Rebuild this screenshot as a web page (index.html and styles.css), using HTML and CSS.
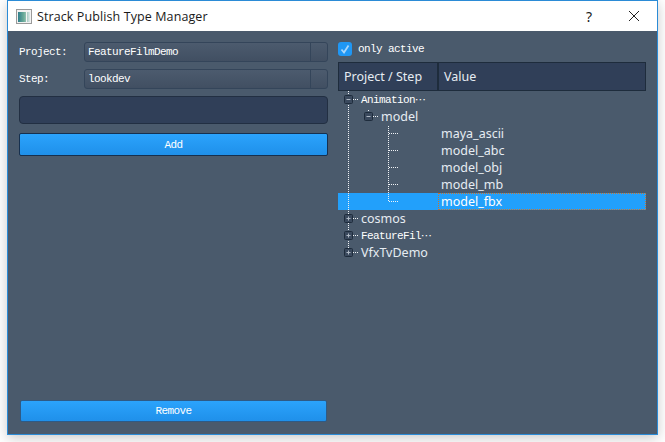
FILE: index.html
```html
<!DOCTYPE html>
<html lang="en">
<head>
<meta charset="utf-8">
<title>Strack Publish Type Manager</title>
<link rel="stylesheet" href="styles.css">
</head>
<body>
<div class="window">
  <header class="titlebar">
    <svg class="app-icon" width="16" height="15" viewBox="0 0 16 15">
      <defs>
        <linearGradient id="screen" x1="0" y1="0" x2="1" y2="0">
          <stop offset="0" stop-color="#2f7f8c"/>
          <stop offset="0.5" stop-color="#6fae9a"/>
          <stop offset="1" stop-color="#dfe8ea"/>
        </linearGradient>
      </defs>
      <rect x="0.5" y="0.5" width="15" height="14" fill="#f2f2f2" stroke="#9a9a9a"/>
      <rect x="2" y="3" width="12" height="10" fill="url(#screen)"/>
      <rect x="10" y="3" width="1" height="10" fill="#f4f4f4"/>
    </svg>
    <span class="title">Strack Publish Type Manager</span>
    <span class="help">?</span>
    <svg class="close" width="12" height="12" viewBox="0 0 12 12"><path d="M1 1 11 11M11 1 1 11" stroke="#222" stroke-width="1" fill="none"/></svg>
  </header>
  <main class="content">
    <section class="left">
      <div class="field">
        <label class="mono">Project:</label>
        <div class="combo"><span class="mono">FeatureFilmDemo</span><i class="combo-arrow"></i></div>
      </div>
      <div class="field">
        <label class="mono">Step:</label>
        <div class="combo"><span class="mono">lookdev</span><i class="combo-arrow"></i></div>
      </div>
      <div class="text-input"></div>
      <button class="btn btn-add mono">Add</button>
      <button class="btn btn-remove mono">Remove</button>
    </section>
    <section class="right">
      <div class="check-row">
        <span class="checkbox"><svg width="14" height="14" viewBox="0 0 14 14"><path d="M3.5 7.5 6 10.5 10.5 3.5" stroke="#a9d6fb" stroke-width="1.8" fill="none"/></svg></span>
        <span class="mono">only active</span>
      </div>
      <div class="tree">
        <div class="tree-head">
          <div class="head-cell head-first">Project / Step</div>
          <div class="head-cell">Value</div>
        </div>
        <div class="tree-body">
          <div class="row lvl0 mono">Animation<span class="dots">⋯</span></div>
          <div class="row lvl1">model</div>
          <div class="row"><span class="value">maya_ascii</span></div>
          <div class="row"><span class="value">model_abc</span></div>
          <div class="row"><span class="value">model_obj</span></div>
          <div class="row"><span class="value">model_mb</span></div>
          <div class="row selected"><span class="value">model_fbx</span></div>
          <div class="row lvl0">cosmos</div>
          <div class="row lvl0 mono">FeatureFil<span class="dots">⋯</span></div>
          <div class="row lvl0">VfxTvDemo</div>
          <svg class="branches" width="70" height="170" viewBox="0 0 70 170">
            <g class="dotted">
              <path d="M10.5 0V160"/>
              <path d="M15 8.5H21M35 25.5H41M15 127.5H21M15 144.5H21M15 161.5H21"/>
              <path d="M30.5 19V22"/>
              <path d="M50.5 35V110"/>
              <path d="M51 42.5H60M51 59.5H60M51 76.5H60M51 93.5H60M51 110.5H60"/>
            </g>
            <g class="expander">
              <rect x="6.5" y="4.5" width="8" height="8" rx="1"/>
              <path d="M8.5 8.5H12.5"/>
              <rect x="26.5" y="21.5" width="8" height="8" rx="1"/>
              <path d="M28.5 25.5H32.5"/>
              <rect x="6.5" y="123.5" width="8" height="8" rx="1"/>
              <path d="M8.5 127.5H12.5M10.5 125.5V129.5"/>
              <rect x="6.5" y="140.5" width="8" height="8" rx="1"/>
              <path d="M8.5 144.5H12.5M10.5 142.5V146.5"/>
              <rect x="6.5" y="157.5" width="8" height="8" rx="1"/>
              <path d="M8.5 161.5H12.5M10.5 159.5V163.5"/>
            </g>
          </svg>
        </div>
      </div>
    </section>
  </main>
</div>
</body>
</html>
```

FILE: styles.css
```css
* { box-sizing: border-box; }

html, body { height: 100%; }

body {
  margin: 0;
  background: #fff;
  overflow: hidden;
  font-family: "Noto Sans", "Open Sans", sans-serif;
  color: #e6ecf2;
}

.window {
  width: 651px;
  height: 435px;
  margin-left: 7px;
  display: flex;
  flex-direction: column;
  border: 1px solid #2b8bd6;
  box-shadow: 0 3px 12px rgba(0, 0, 0, 0.22);
}

.titlebar {
  height: 30px;
  flex: none;
  background: #fff;
  display: flex;
  align-items: center;
  padding-left: 8px;
  color: #1a1a1a;
}

.app-icon { flex: none; }

.title {
  margin-left: 5px;
  font-family: "Open Sans", sans-serif;
  font-size: 12.5px;
  letter-spacing: 0.1px;
  flex: 1;
}

.help {
  font-size: 14px;
  width: 12px;
  margin-right: 30px;
}

.close { margin-right: 17px; flex: none; }

.content {
  flex: 1;
  background: #4a5a6c;
  display: flex;
  gap: 10px;
  padding: 11px 11px 12px;
  min-height: 0;
}

.mono {
  font-family: "Liberation Mono", monospace;
  font-size: 11px;
  letter-spacing: -0.6px;
  color: #fff;
}

.left {
  width: 309px;
  flex: none;
  display: flex;
  flex-direction: column;
}

.field {
  display: flex;
  align-items: center;
  height: 20px;
  margin-bottom: 7px;
}

.field label { width: 65px; flex: none; }

.combo {
  flex: 1;
  height: 20px;
  border: 1px solid #34455a;
  border-radius: 3px;
  background: linear-gradient(#4c5b6e, #414f62);
  display: flex;
  align-items: center;
  justify-content: space-between;
  padding-left: 3px;
}

.combo-arrow {
  width: 17px;
  height: 18px;
  border-left: 1px solid #34455a;
}

.text-input {
  height: 28px;
  background: #303f58;
  border: 1px solid #222f42;
  border-radius: 4px;
}

.btn {
  display: block;
  padding: 0;
  background: linear-gradient(#2ba3fc, #1f90ea);
  border-radius: 2px;
  text-align: center;
}

.btn-add {
  height: 23px;
  margin-top: 9px;
  border: 1px solid #16304f;
}

.btn-remove {
  height: 22px;
  margin: auto 1px 0;
  border: 1px solid #2f5a85;
}

.right {
  flex: 1;
  min-width: 0;
  display: flex;
  flex-direction: column;
}

.check-row {
  height: 14px;
  margin-bottom: 6px;
  display: flex;
  align-items: center;
  gap: 6px;
}

.checkbox {
  width: 14px;
  height: 14px;
  border-radius: 3px;
  background: #1f97f5;
  display: block;
}

.checkbox svg { display: block; }

.tree-head {
  height: 29px;
  display: grid;
  grid-template-columns: 100px 1fr;
  background: #303f58;
  border: 1px solid #1e2c3c;
  font-size: 12.5px;
}

.head-cell {
  padding-left: 5px;
  line-height: 27px;
}

.head-first { border-right: 2px solid #1e2c3c; }

.tree-body {
  position: relative;
  font-size: 12.5px;
}

.row {
  height: 17px;
  line-height: 17px;
}

.lvl0 { padding-left: 23px; }
.lvl1 { padding-left: 43px; }

.value {
  display: block;
  margin-left: 100px;
  height: 17px;
  padding-left: 3px;
}

.selected { background: #22a0fb; }

.selected .value {
  border: 1px dotted #c9742f;
  line-height: 15px;
  padding-left: 2px;
  color: #fff;
}

.dots {
  font-family: "DejaVu Sans", sans-serif;
  font-size: 11px;
  letter-spacing: 0;
}

.branches {
  position: absolute;
  left: 0;
  top: 0;
  pointer-events: none;
}

.dotted path {
  fill: none;
  stroke: #f0f3f6;
  stroke-width: 1;
  stroke-dasharray: 1 1;
}

.expander rect {
  fill: #3a495d;
  stroke: #1e2c3c;
}

.expander path {
  fill: none;
  stroke: #aeb8c4;
  stroke-width: 1;
}
```
